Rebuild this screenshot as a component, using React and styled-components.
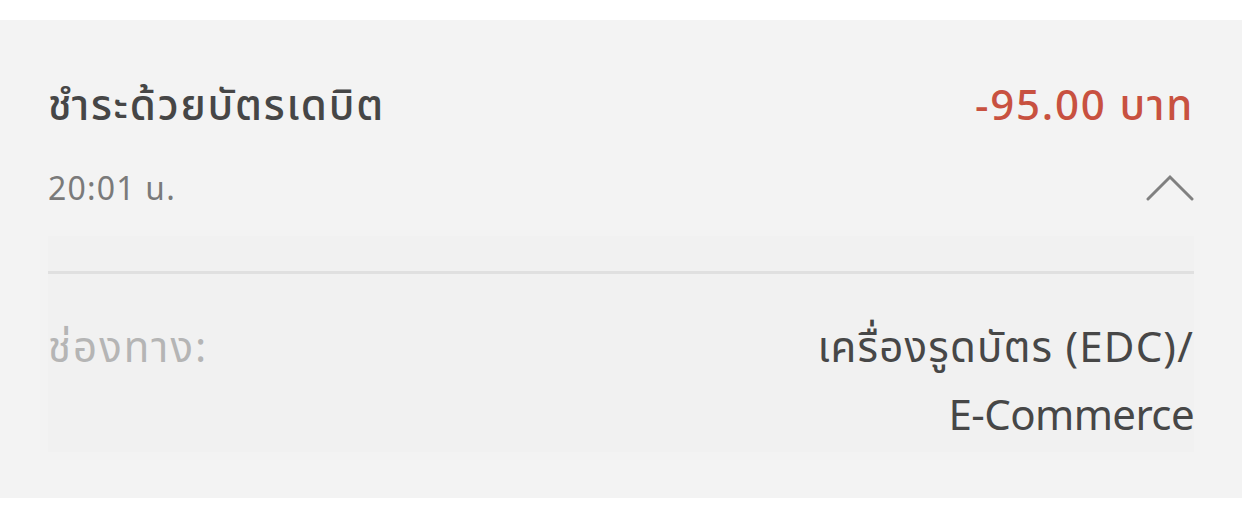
import React from "react";
import styled, { createGlobalStyle } from "styled-components";

const Global = createGlobalStyle`
  html, body { margin: 0; padding: 0; background: #ffffff; }
  body { font-family: "Noto Sans", "Noto Sans Thai", "Open Sans", sans-serif; }
`;

const Page = styled.div`
  padding-top: 20px;
  width: 1242px;
`;

const Card = styled.section`
  background: #f3f3f3;
  padding: 0 48px;
  height: 478px;
  box-sizing: border-box;
  display: flex;
  flex-direction: column;
`;

const HeaderRow = styled.div`
  display: flex;
  justify-content: space-between;
  align-items: baseline;
  padding-top: 62px;
  height: 44px;
`;

const Title = styled.h2`
  margin: 0;
  font-size: 42px;
  font-weight: 500;
  letter-spacing: 1.8px;
  color: #464646;
  line-height: 44px;
`;

const Amount = styled.div`
  font-size: 42px;
  font-weight: 500;
  letter-spacing: 1.8px;
  color: #c85140;
  line-height: 44px;
`;

const SubRow = styled.div`
  display: flex;
  justify-content: space-between;
  align-items: center;
  margin-top: 42px;
  height: 40px;
`;

const Time = styled.div`
  font-size: 32px;
  letter-spacing: 1.2px;
  line-height: 40px;
  color: #7a7a7a;
`;

const Chevron = styled.svg`
  width: 48px;
  height: 28px;
  display: block;
`;

const Detail = styled.div`
  margin-top: 28px;
  background: #f1f1f1;
  padding-top: 35px;
  height: 216px;
  box-sizing: border-box;
`;

const Divider = styled.div`
  height: 3px;
  background: #e0e0e0;
`;

const InfoRow = styled.div`
  display: flex;
  justify-content: space-between;
  align-items: flex-start;
  padding-top: 38px;
`;

const Label = styled.div`
  font-size: 42px;
  letter-spacing: 2px;
  color: #b5b5b5;
  line-height: 68px;
`;

const Value = styled.div`
  font-size: 42px;
  color: #474747;
  text-align: right;
  line-height: 68px;
`;

const ValueLine = styled.span`
  display: block;
  letter-spacing: ${(p) => p.$spacing}px;
`;

export default function App() {
  return (
    <>
      <Global />
      <Page>
        <Card>
          <HeaderRow>
            <Title>ชำระด้วยบัตรเดบิต</Title>
            <Amount>-95.00 บาท</Amount>
          </HeaderRow>
          <SubRow>
            <Time>20:01 น.</Time>
            <Chevron viewBox="0 0 48 28">
              <polyline points="2,25 24,3 46,25" fill="none" stroke="#808080" strokeWidth="3" strokeLinecap="round" />
            </Chevron>
          </SubRow>
          <Detail>
            <Divider />
            <InfoRow>
              <Label>ช่องทาง:</Label>
              <Value>
                <ValueLine $spacing={1.2}>เครื่องรูดบัตร (EDC)/</ValueLine>
                <ValueLine $spacing={-0.6}>E-Commerce</ValueLine>
              </Value>
            </InfoRow>
          </Detail>
        </Card>
      </Page>
    </>
  );
}
